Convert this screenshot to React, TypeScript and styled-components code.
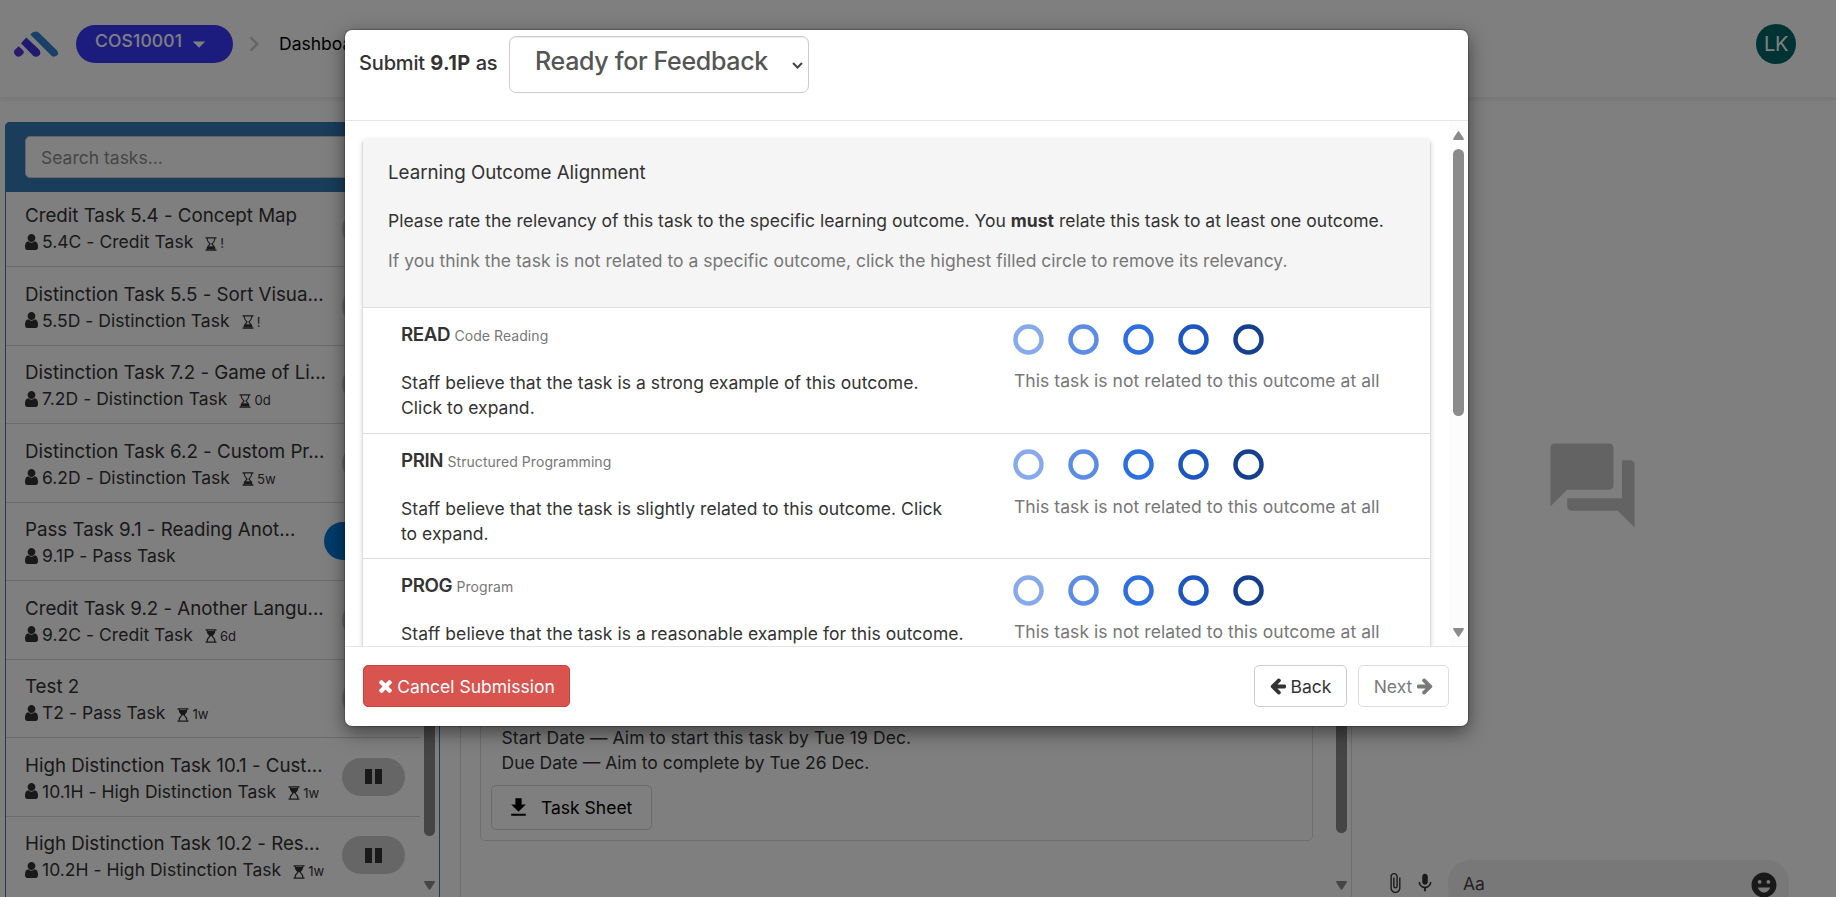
import React from 'react';
import styled, { createGlobalStyle } from 'styled-components';
import {
  MdArrowDropDown,
  MdAttachFile,
  MdChevronRight,
  MdDownload,
  MdEmojiEmotions,
  MdForum,
  MdMic,
} from 'react-icons/md';

const GlobalStyle = createGlobalStyle`
  *, *::before, *::after { box-sizing: border-box; }
  html, body { margin: 0; height: 897px; overflow: hidden; background: #fafafa; }
  body { font-family: Inter, "Liberation Sans", sans-serif; font-size: 17.5px; line-height: 25px; color: #333; }
  p { margin: 0; }
`;

const Screen = styled.div`
  position: relative;
  width: 1836px;
  height: 897px;
  overflow: hidden;
  background: #fff;
`;

const TopBar = styled.header`
  display: flex;
  align-items: center;
  height: 97px;
  padding: 0 40px 10px 13px;
  box-shadow: 0 1px 6px rgba(0, 0, 0, 0.12);
`;

const Logo = styled.svg`
  width: 46px;
  height: 28px;
  margin-right: 17px;
`;

const UnitPill = styled.button`
  display: flex;
  align-items: center;
  width: 157px;
  height: 38px;
  padding: 0 0 0 19px;
  border: 0;
  border-radius: 19px;
  background: #3939ff;
  color: #fff;
  font: 500 17.5px/32px Inter, sans-serif;
  letter-spacing: 0.14px;
  span { height: 38px; }
  svg { margin-left: 2px; }
`;

const Crumb = styled.div`
  display: flex;
  align-items: center;
  flex: 1;
  color: #000;
  svg { margin: 0 10px 0 6px; color: #ccc; }
`;

const Avatar = styled.div`
  width: 40px;
  height: 40px;
  border-radius: 50%;
  background: #006666;
  color: #fff;
  font: 20px/40px Inter, sans-serif;
  letter-spacing: -0.3px;
  text-align: center;
`;

const Columns = styled.main`
  display: flex;
  height: 800px;
  padding-left: 5px;
`;

const TaskPanel = styled.section`
  display: flex;
  flex-direction: column;
  flex: none;
  width: 435px;
  margin-top: 25px;
  border: 1px solid #337ab7;
  border-bottom: 0;
  border-radius: 5px 5px 0 0;
`;

const SearchBar = styled.div`
  height: 70px;
  padding: 14px 20px;
  margin: -1px -1px 0;
  border-radius: 5px 5px 0 0;
  background: #337ab7;
`;

const SearchBox = styled.div`
  height: 42px;
  padding: 8px 15px;
  border: 1px solid #ccc;
  border-radius: 5px;
  background: #fff;
  color: #8c8c8c;
  line-height: 26px;
`;

const TaskScroller = styled.div`
  display: flex;
  flex: 1;
  min-height: 0;
`;

const TaskList = styled.div`
  flex: 1;
  overflow: hidden;
`;

const TaskRow = styled.div`
  display: flex;
  justify-content: space-between;
  align-items: center;
  height: 78.5px;
  padding: 0 15px 0 19px;
  border-bottom: 1px solid #d6d6d6;
  > div:first-child { padding-top: 3px; }
  &:first-child { height: 75px; }
  &:first-child > div:first-child { padding: 0 0 1px; }
  &:last-child { border-color: transparent; }
`;

const TaskTitle = styled.div`
  font-size: 18.75px;
  line-height: 26px;
  letter-spacing: -0.02px;
  white-space: nowrap;
`;

const TaskMeta = styled.div`
  display: flex;
  align-items: center;
  height: 25px;
  letter-spacing: 0.03px;
  white-space: nowrap;
  > svg { margin-right: 4px; flex: none; }
`;

const Due = styled.span`
  display: flex;
  align-items: center;
  gap: 3px;
  margin: 4px 0 0 12px;
  font-size: 13.1px;
`;

const StatusPill = styled.div<{ $active?: boolean }>`
  display: flex;
  justify-content: center;
  align-items: center;
  gap: 3px;
  flex: none;
  width: ${(p) => (p.$active ? 81 : 63)}px;
  height: 38px;
  border-radius: 19px;
  background: ${(p) => (p.$active ? '#0079d8' : '#ccc')};
  i { width: 7px; height: 15px; background: #333; }
`;

const ScrollTrack = styled.div<{ $tint?: string }>`
  display: flex;
  flex-direction: column;
  align-items: center;
  flex: none;
  width: 19px;
  background: ${(p) => p.$tint ?? 'transparent'};
  > svg { flex: none; }
`;

const SideTrack = styled(ScrollTrack)<{ $gap: number }>`
  justify-content: flex-end;
  gap: ${(p) => p.$gap}px;
  padding-bottom: 7px;
`;

const DialogTrack = styled(ScrollTrack)`
  padding: 10px 0 9px;
  gap: 9px;
  svg:last-child { margin-top: auto; }
`;

const Thumb = styled.div<{ $h: number }>`
  flex: none;
  width: 11px;
  height: ${(p) => p.$h}px;
  border-radius: 6px;
  background: #8b8b8b;
`;

const TaskDetail = styled.section`
  display: flex;
  flex: none;
  width: 892px;
  margin-left: 20px;
  border: solid #ddd;
  border-width: 0 1px;
`;

const DetailBody = styled.div`
  flex: 1;
  padding: 25px 18px 56px 19px;
`;

const DetailCard = styled.div`
  display: flex;
  flex-direction: column;
  justify-content: flex-end;
  align-items: flex-start;
  width: 833px;
  height: 719px;
  padding: 0 10px 10px;
  border: 1px solid #ddd;
  border-radius: 5px;
  p { margin-left: 10.5px; }
  p:first-child { letter-spacing: 0.09px; }
`;

const SheetButton = styled.button`
  display: flex;
  align-items: center;
  gap: 10px;
  width: 161px;
  height: 45px;
  margin-top: 10px;
  padding: 0 0 0 14px;
  border: 1px solid #d6d6d6;
  border-radius: 5px;
  background: transparent;
  color: #000;
  font: 17.5px/25px Inter, sans-serif;
`;

const Discussion = styled.aside`
  display: flex;
  flex-direction: column;
  flex: 1;
  padding: 338px 41px 0 32px;
  > svg { align-self: center; margin-left: 6px; color: #c7c7c7; flex: none; }
`;

const Composer = styled.div`
  display: flex;
  margin-top: 324px;
  color: #333;
  > svg { margin: 12px 8px 0 0; flex: none; }
`;

const MessageBox = styled.div`
  display: flex;
  justify-content: space-between;
  flex: none;
  width: 341px;
  height: 52px;
  margin-left: 4px;
  padding: 10px 10px 0 15px;
  border-radius: 22px;
  background: #f1f1f1;
  span { line-height: 27px; color: #444; }
`;

const Backdrop = styled.div`
  position: absolute;
  inset: 0;
  padding: 30px 0 0 345px;
  background: rgba(0, 0, 0, 0.5);
`;

const Dialog = styled.div`
  display: flex;
  flex-direction: column;
  width: 1123px;
  height: 696px;
  border-radius: 7px;
  background: #fff;
  box-shadow: 0 6px 19px rgba(0, 0, 0, 0.5), 0 0 1px 1px rgba(0, 0, 0, 0.2);
`;

const DialogHeader = styled.div`
  display: flex;
  align-items: flex-start;
  height: 91px;
  padding: 6px 14px 0;
  border-bottom: 1px solid #e5e5e5;
`;

const DialogTitle = styled.div`
  width: 150px;
  padding-top: 15px;
  font-size: 20px;
  font-weight: 500;
  letter-spacing: -0.15px;
  white-space: nowrap;
  b { font-weight: 700; letter-spacing: 0.35px; }
`;

const StatusSelect = styled.div`
  display: flex;
  justify-content: space-between;
  width: 300px;
  height: 57px;
  padding: 10px 4px 0 25px;
  border: 1px solid #ccc;
  border-radius: 7px;
  box-shadow: inset 0 1px 1px rgba(0, 0, 0, 0.075);
  color: #555;
  font-size: 25px;
  font-weight: 500;
  letter-spacing: -0.33px;
  line-height: 28px;
  svg { margin-top: 14px; }
`;

const DialogBody = styled.div`
  display: flex;
  flex: 1;
  min-height: 0;
`;

const BodyView = styled.div`
  flex: 1;
  padding: 18px 18px 0 17px;
  overflow: hidden;
`;

const OutcomePanel = styled.div`
  border: 1px solid #ddd;
  border-top-color: #f5f5f5;
  border-radius: 5px;
  box-shadow: 0 1px 5px rgba(0, 0, 0, 0.15);
`;

const Intro = styled.div`
  height: 168px;
  padding: 20px 25px 0;
  border-bottom: 1px solid #ddd;
  background: #f5f5f5;
  letter-spacing: 0.015px;
  h3 { margin: 0 0 23px; font-size: 18.75px; font-weight: 400; line-height: 25px; letter-spacing: -0.02px; }
  p { margin-bottom: 15px; color: #777; white-space: nowrap; }
  p.lead { color: #333; }
`;

const OutcomeRow = styled.div`
  display: flex;
  height: 125.5px;
  padding-left: 38px;
  border-bottom: 1px solid #ddd;
`;

const OutcomeText = styled.div`
  width: 613px;
  padding-top: 14px;
  h4 { margin: 0 0 22px; font-size: 18.75px; font-weight: 600; line-height: 25px; letter-spacing: -0.4px; }
  small { font-size: 14px; font-weight: 400; letter-spacing: 0.06px; color: #777; }
  p { white-space: pre-line; letter-spacing: 0.05px; }
`;

const Rating = styled.div`
  padding-top: 16px;
  color: #777;
  letter-spacing: 0.06px;
`;

const Rings = styled.div`
  display: flex;
  gap: 24px;
  margin: -0.5px 0 13.5px -1.5px;
  svg { display: block; }
`;

const DialogFooter = styled.div`
  display: flex;
  gap: 11px;
  height: 80px;
  padding: 18px 19px 0 18px;
  border-top: 1px solid #e5e5e5;
`;

const FooterButton = styled.button<{ $w: number; $danger?: boolean; $muted?: boolean }>`
  display: flex;
  justify-content: center;
  align-items: center;
  gap: 5px;
  width: ${(p) => p.$w}px;
  height: 42px;
  padding: 0 0 0 ${(p) => (p.$danger ? 1 : 0)}px;
  border: 1px solid ${(p) => (p.$danger ? '#d43f3a' : '#ccc')};
  border-radius: 5px;
  background: ${(p) => (p.$danger ? '#d9534f' : '#fff')};
  color: ${(p) => (p.$danger ? '#fff' : '#333')};
  opacity: ${(p) => (p.$muted ? 0.65 : 1)};
  margin-right: ${(p) => (p.$danger ? 'auto' : '0')};
  font: 17.5px/25px Inter, sans-serif;
`;

const UserIcon = () => (
  <svg width="13" height="16" viewBox="256 128 1280 1536" preserveAspectRatio="none" fill="#333">
    <path d="M1536 1399q0 109-62.5 187t-150.5 78h-854q-88 0-150.5-78t-62.5-187q0-85 8.5-160.5t31.5-152 58.5-131 94-89 134.5-34.5q131 128 313 128t313-128q76 0 134.5 34.5t94 89 58.5 131 31.5 152 8.5 160.5zm-256-887q0 159-112.5 271.5t-271.5 112.5-271.5-112.5-112.5-271.5 112.5-271.5 271.5-112.5 271.5 112.5 112.5 271.5z" />
  </svg>
);

const Hourglass = ({ level }: { level: 'start' | 'end' }) => (
  <svg width="12" height="14" viewBox="0 0 12 14">
    <path d="M.5.9h11M.5 13.1h11M2 1c0 3 1.2 4.400 3 6C3.200 8.600 2 10 2 13M10 1c0 3-1.200 4.400-3 6 1.800 1.600 3 3 3 6" fill="none" stroke="#333" strokeWidth="1.100" />
    {level === 'start' ? (
      <path d="M2 2h8c-.2 2-1.200 3.400-3 5H5C3.200 5.400 2.200 4 2 2z" fill="#333" />
    ) : (
      <path d="M2.200 12.500c.2-1.600.8-2.500 1.800-3.200h4c1 .7 1.600 1.600 1.800 3.200z" fill="#333" />
    )}
  </svg>
);

const CrossIcon = () => (
  <svg width="13" height="13" viewBox="302 238 1188 1188" fill="currentColor">
    <path transform="translate(0 -128)" d="M1490 1322q0 40-28 68l-136 136q-28 28-68 28t-68-28l-294-294-294 294q-28 28-68 28t-68-28l-136-136q-28-28-28-68t28-68l294-294-294-294q-28-28-28-68t28-68l136-136q28-28 68-28t68 28l294 294 294-294q28-28 68-28t68 28l136 136q28 28 28 68t-28 68l-294 294 294 294q28 28 28 68z" />
  </svg>
);

const ArrowIcon = ({ flip }: { flip?: boolean }) => (
  <svg width="16" height="17" viewBox="128 160 1536 1600" fill="currentColor" transform={flip ? 'scale(-1 1)' : undefined}>
    <path d="M1664 896v128q0 53-32.5 90.5t-84.5 37.5h-704l293 294q38 36 38 90t-38 90l-75 76q-37 37-90 37-52 0-91-37l-651-652q-37-37-37-90 0-52 37-91l651-650q38-38 91-38 52 0 90 38l75 74q38 38 38 91t-38 91l-293 293h704q52 0 84.5 37.5t32.5 90.5z" />
  </svg>
);

const ScrollArrow = ({ up }: { up?: boolean }) => (
  <svg width="11" height="9" viewBox="0 0 11 9" fill="#8b8b8b">
    <path d={up ? 'M4.800.6q.7-.9 1.400 0l4.500 7q.4 1.400-.7 1.400H1Q-.1 9 .3 7.600z' : 'M4.800 8.400q.7.9 1.400 0l4.500-7Q11.100 0 10 0H1Q-.1 0 .3 1.400z'} />
  </svg>
);

type Task = { title: string; meta: string; due?: string; level?: 'start' | 'end'; active?: boolean };

const tasks: Task[] = [
  { title: 'Credit Task 5.4 - Concept Map', meta: '5.4C - Credit Task', due: '!', level: 'end' },
  { title: 'Distinction Task 5.5 - Sort Visua...', meta: '5.5D - Distinction Task', due: '!', level: 'end' },
  { title: 'Distinction Task 7.2 - Game of Li...', meta: '7.2D - Distinction Task', due: '0d', level: 'end' },
  { title: 'Distinction Task 6.2 - Custom Pr...', meta: '6.2D - Distinction Task', due: '5w', level: 'end' },
  { title: 'Pass Task 9.1 - Reading Anot...', meta: '9.1P - Pass Task', active: true },
  { title: 'Credit Task 9.2 - Another Langu...', meta: '9.2C - Credit Task', due: '6d', level: 'start' },
  { title: 'Test 2', meta: 'T2 - Pass Task', due: '1w', level: 'start' },
  { title: 'High Distinction Task 10.1 - Cust...', meta: '10.1H - High Distinction Task', due: '1w', level: 'start' },
  { title: 'High Distinction Task 10.2 - Res...', meta: '10.2H - High Distinction Task', due: '1w', level: 'start' },
];

const outcomes = [
  { code: 'READ', name: 'Code Reading', text: 'Staff believe that the task is a strong example of this outcome.\nClick to expand.' },
  { code: 'PRIN', name: 'Structured Programming', text: 'Staff believe that the task is slightly related to this outcome. Click\nto expand.' },
  { code: 'PROG', name: 'Program', text: 'Staff believe that the task is a reasonable example for this outcome.' },
];

const ringColors = ['#87aaee', '#5b8de8', '#2d6ee3', '#1b56c3', '#173f8f'];

export default function App() {
  return (
    <Screen>
      <GlobalStyle />
      <TopBar>
        <Logo viewBox="0 0 46 28">
          <path d="M17.300 4.500q4-4.800 8.400-2L43.800 20.300q2.500 3.300.2 5.200-3 2.200-5.500.2z" fill="#3282cf" />
          <path d="M8 13.200l5.300-5.700L26 19.600q2.600 3.200.2 5.900-3.200 2.500-6 .2z" fill="#3f34e0" />
          <path d="M5.700 16.200l4.500 4.300q1.600 1.700 0 3.300l-1.700 1.800q-2.300 1.700-5 .6-2.600-1.500-2.600-4.200 0-1.300 1-2.200z" fill="#5a30dc" />
        </Logo>
        <UnitPill>
          <span>COS10001</span>
          <MdArrowDropDown size={30} />
        </UnitPill>
        <Crumb>
          <MdChevronRight size={30} />
          Dashboard
        </Crumb>
        <Avatar>LK</Avatar>
      </TopBar>

      <Columns>
        <TaskPanel>
          <SearchBar>
            <SearchBox>Search tasks...</SearchBox>
          </SearchBar>
          <TaskScroller>
            <TaskList>
              {tasks.map((t) => (
                <TaskRow key={t.title}>
                  <div>
                    <TaskTitle>{t.title}</TaskTitle>
                    <TaskMeta>
                      <UserIcon />
                      {t.meta}
                      {t.due && t.level && (
                        <Due>
                          <Hourglass level={t.level} />
                          {t.due}
                        </Due>
                      )}
                    </TaskMeta>
                  </div>
                  <StatusPill $active={t.active}>
                    {!t.active && <><i /><i /></>}
                  </StatusPill>
                </TaskRow>
              ))}
            </TaskList>
            <SideTrack $gap={45}>
              <Thumb $h={400} />
              <ScrollArrow />
            </SideTrack>
          </TaskScroller>
        </TaskPanel>

        <TaskDetail>
          <DetailBody>
            <DetailCard>
              <p>Start Date — Aim to start this task by Tue 19 Dec.</p>
              <p>Due Date — Aim to complete by Tue 26 Dec.</p>
              <SheetButton>
                <MdDownload size={25} />
                Task Sheet
              </SheetButton>
            </DetailCard>
          </DetailBody>
          <SideTrack $gap={48}>
            <Thumb $h={500} />
            <ScrollArrow />
          </SideTrack>
        </TaskDetail>

        <Discussion>
          <MdForum size={101} />
          <Composer>
            <MdAttachFile size={22} />
            <MdMic size={22} />
            <MessageBox>
              <span>Aa</span>
              <MdEmojiEmotions size={30} />
            </MessageBox>
          </Composer>
        </Discussion>
      </Columns>

      <Backdrop>
        <Dialog>
          <DialogHeader>
            <DialogTitle>
              Submit <b>9.1P</b> as
            </DialogTitle>
            <StatusSelect>
              Ready for Feedback
              <svg width="13" height="9" viewBox="0 0 13 9">
                <path d="M2 2l4.500 4.500L11 2" fill="none" stroke="#444" strokeWidth="2" />
              </svg>
            </StatusSelect>
          </DialogHeader>
          <DialogBody>
            <BodyView>
              <OutcomePanel>
                <Intro>
                  <h3>Learning Outcome Alignment</h3>
                  <p className="lead">
                    Please rate the relevancy of this task to the specific learning outcome. You <b>must</b> relate this task to at least one outcome.
                  </p>
                  <p>If you think the task is not related to a specific outcome, click the highest filled circle to remove its relevancy.</p>
                </Intro>
                {outcomes.map((o) => (
                  <OutcomeRow key={o.code}>
                    <OutcomeText>
                      <h4>
                        {o.code} <small>{o.name}</small>
                      </h4>
                      <p>{o.text}</p>
                    </OutcomeText>
                    <Rating>
                      <Rings>
                        {ringColors.map((c) => (
                          <svg key={c} width="31" height="31" viewBox="0 0 31 31">
                            <circle cx="15.500" cy="15.500" r="13" fill="none" stroke={c} strokeWidth="4.500" />
                          </svg>
                        ))}
                      </Rings>
                      This task is not related to this outcome at all
                    </Rating>
                  </OutcomeRow>
                ))}
              </OutcomePanel>
            </BodyView>
            <DialogTrack $tint="#fcfcfc">
              <ScrollArrow up />
              <Thumb $h={267} />
              <ScrollArrow />
            </DialogTrack>
          </DialogBody>
          <DialogFooter>
            <FooterButton $w={207} $danger>
              <CrossIcon />
              Cancel Submission
            </FooterButton>
            <FooterButton $w={93}>
              <ArrowIcon />
              Back
            </FooterButton>
            <FooterButton $w={91} $muted>
              Next
              <ArrowIcon flip />
            </FooterButton>
          </DialogFooter>
        </Dialog>
      </Backdrop>
    </Screen>
  );
}
